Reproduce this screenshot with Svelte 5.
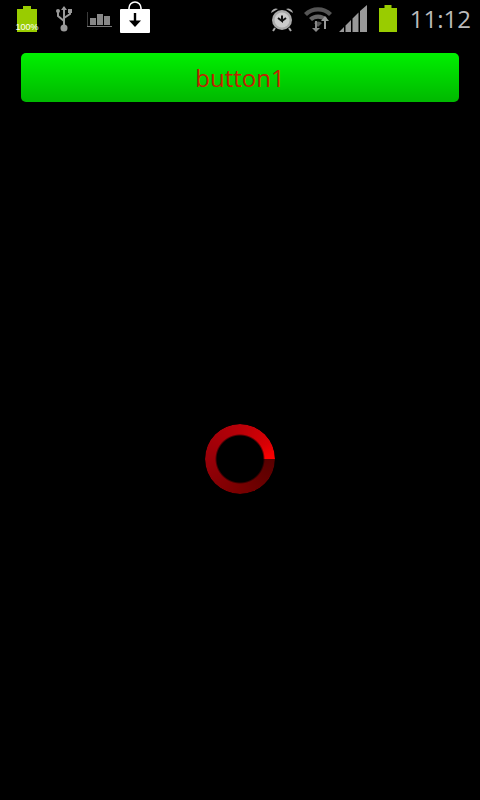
<script>
	let time = "11:12"
	let label = "button1"
</script>

<main>
	<div class="statusbar">
		<div class="left">
			<div class="batt100">
				<svg width="20" height="26" viewBox="0 0 20 26">
					<path d="M6 0h8v3h6v23H0V3h6z" fill="#9c0" />
				</svg>
				<span class="pct">100%</span>
			</div>
			<svg class="usb" width="18" height="26" viewBox="0 0 18 26">
				<path d="M9 1v18M9 15L3 10V6M9 12l6-4V5" fill="none" stroke="#999" stroke-width="2" />
				<path d="M9 0l3 4H6z" fill="#999" />
				<circle cx="3" cy="5" r="2" fill="#999" />
				<rect x="13" y="3" width="4" height="4" fill="#999" />
				<circle cx="9" cy="22" r="3.5" fill="#999" />
			</svg>
			<svg class="bars" width="25" height="15" viewBox="0 0 25 15">
				<path d="M0 0v14.5h25" fill="none" stroke="#777" stroke-width="1" />
				<rect x="3" y="6" width="6" height="7" fill="#888" />
				<rect x="10" y="2" width="6" height="11" fill="#888" />
				<rect x="17" y="4" width="6" height="9" fill="#888" />
			</svg>
			<svg class="bag" width="30" height="32" viewBox="0 0 30 32">
				<path d="M9 9V7a6 6 0 0 1 12 0v2" fill="none" stroke="#fff" stroke-width="1.6" />
				<rect x="0" y="8" width="30" height="24" rx="1" fill="#fff" />
				<path d="M15 12v9" fill="none" stroke="#000" stroke-width="2.400" />
				<path d="M9 19.500h12l-6 6.500z" fill="#000" />
			</svg>
		</div>
		<div class="right">
			<svg class="alarm" width="24" height="26" viewBox="0 0 24 26">
				<path d="M1 7a5 5 0 0 1 7-4zM23 7a5 5 0 0 0-7-4z" fill="#aaa" />
				<path d="M5 22l-2 3M19 22l2 3" stroke="#aaa" stroke-width="2" />
				<circle cx="12" cy="14" r="10" fill="#aaa" />
				<circle cx="12" cy="14" r="7.500" fill="#ccc" />
				<path d="M12 9.500V15l-4-3M12 15l4-3" fill="none" stroke="#111" stroke-width="2" />
			</svg>
			<svg class="wifi" width="28" height="27" viewBox="0 0 28 27">
				<path d="M0 8a20 20 0 0 1 28 0l-3 3a16 16 0 0 0-22 0z" fill="#555" />
				<path d="M5 13a13 13 0 0 1 18 0l-3 3a9 9 0 0 0-12 0z" fill="#666" />
				<path d="M10 18a6 6 0 0 1 8 0l-4 4z" fill="#555" />
				<path d="M12 16v7h-3l4 4 4-4h-3v-7z" fill="#888" transform="translate(-1 0)" />
				<path d="M20 24v-8h3l-4-5-4 5h3v8z" fill="#999" transform="translate(2 0)" />
			</svg>
			<svg class="signal" width="28" height="27" viewBox="0 0 28 27">
				<path d="M0 27L5 22V27zM6.500 27V20.500L12 15V27zM13.500 27V13.500L19.500 7.500V27zM21 27V6L28 0V27z" fill="#999" />
			</svg>
			<svg class="batt" width="18" height="27" viewBox="0 0 18 27">
				<path d="M5.500 0h7v3H18v24H0V3h5.500z" fill="#9c0" />
			</svg>
			<span class="time">{time}</span>
		</div>
	</div>
	<button class="btn">{label}</button>
	<div class="spinwrap">
		<div class="spinner"></div>
	</div>
</main>

<style>
:global(body) {
	background: #000;
}
main {
	display: flex;
	flex-direction: column;
	height: 800px;
	background: #000;
	font-family: "Open Sans", sans-serif;
}
.statusbar {
	display: flex;
	justify-content: space-between;
	height: 38px;
	box-sizing: border-box;
	padding: 0 9px 0 17px;
}
.left, .right {
	display: flex;
}
.batt100 {
	position: relative;
	width: 20px;
	height: 26px;
	margin-top: 6px;
}
.pct {
	position: absolute;
	left: -3px;
	width: 26px;
	bottom: 0;
	font-size: 9px;
	line-height: 9px;
	text-align: center;
	color: #fff;
	font-family: "Liberation Sans", sans-serif;
}
.usb {
	margin: 6px 0 0 18px;
}
.bars {
	margin: 12px 0 0 14px;
}
.bag {
	margin: 1px 0 0 8px;
}
.alarm {
	margin-top: 6px;
}
.wifi {
	margin: 5px 0 0 10px;
}
.signal {
	margin: 5px 0 0 7px;
}
.batt {
	margin: 5px 0 0 12px;
}
.time {
	margin: 3px 0 0 13px;
	font-size: 24px;
	line-height: 32px;
	color: #bbb;
}
.btn {
	display: block;
	flex: none;
	height: 49px;
	margin: 15px 21px 0;
	padding: 0;
	border: none;
	border-radius: 5px;
	background: linear-gradient(#00f000, #00b800);
	color: #c02000;
	font-family: inherit;
	font-size: 24px;
}
.spinwrap {
	flex: 1;
	display: flex;
	align-items: center;
	justify-content: center;
	padding-top: 16px;
}
.spinner {
	width: 70px;
	height: 70px;
	border-radius: 50%;
	background: conic-gradient(from 90deg, #580000, #780000 90deg, #980008 180deg, #b80008 270deg, #d80004 330deg, #ff0000 360deg);
	-webkit-mask: radial-gradient(circle, transparent 23px, #000 25px);
	mask: radial-gradient(circle, transparent 23px, #000 25px);
}
</style>
